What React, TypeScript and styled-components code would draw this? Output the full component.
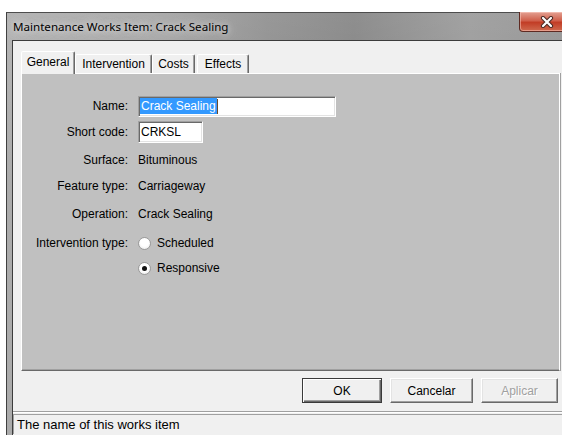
import React from "react";
import styled, { createGlobalStyle } from "styled-components";

const GlobalStyle = createGlobalStyle`
  html,
  body {
    margin: 0;
    background: #fff;
  }
  body {
    overflow: hidden;
  }
`;

const Page = styled.div`
  width: 562px;
  height: 435px;
  overflow: hidden;
  box-sizing: border-box;
  padding: 12px 0 0 6px;
`;

const Window = styled.div`
  width: 580px;
  height: 423px;
  box-sizing: border-box;
  display: flex;
  flex-direction: column;
  border-left: 1px solid #3f3f3f;
  border-top: 1px solid #4d4d4d;
  background: linear-gradient(180deg, rgba(255, 255, 255, 0.12), rgba(255, 255, 255, 0) 40%),
    linear-gradient(90deg, #ababab 0%, #a2a2a2 25%, #8a8a8a 45%, #7f7f7f 60%, #969696 80%, #8c8c8c 100%);
`;

const TitleBar = styled.div`
  height: 27px;
  flex-shrink: 0;
  display: flex;
  align-items: center;
  padding-left: 6px;
`;

const Title = styled.span`
  font-family: "Noto Sans", "Open Sans", sans-serif;
  font-size: 11.6px;
  color: #000;
  text-shadow: 0 0 6px rgba(235, 235, 235, 0.95), 0 0 12px rgba(225, 225, 225, 0.8);
`;

const CloseButton = styled.div`
  align-self: flex-start;
  margin: -1px 11px 0 auto;
  width: 56px;
  height: 20px;
  box-sizing: border-box;
  border: 1px solid #5e2a22;
  border-top: none;
  border-radius: 0 0 4px 4px;
  background: linear-gradient(180deg, #e3a092 0%, #d0604c 45%, #c23d26 55%, #cf6a4f 100%);
  box-shadow: inset 0 0 0 1px rgba(255, 210, 200, 0.5);
  display: flex;
  align-items: center;
  justify-content: center;
`;

const Client = styled.div`
  flex: 1;
  margin: 0 6px 0 5px;
  border: 1px solid #3c3c3c;
  border-bottom: none;
  background: #f0f0f0;
  display: flex;
  flex-direction: column;
  font-family: "Liberation Sans", Arial, sans-serif;
  font-size: 12px;
  color: #000;
`;

const TabStrip = styled.div`
  display: flex;
  align-items: flex-end;
  padding: 10px 0 0 8px;
`;

const Tab = styled.div<{ $w: number; $active?: boolean; $gap?: number }>`
  position: relative;
  z-index: ${(p) => (p.$active ? 1 : 0)};
  width: ${(p) => p.$w}px;
  height: ${(p) => (p.$active ? 23 : 19)}px;
  margin-left: ${(p) => p.$gap ?? 0}px;
  margin-bottom: ${(p) => (p.$active ? -1 : 0)}px;
  box-sizing: border-box;
  background: #f0f0f0;
  border-style: solid;
  border-width: 1px 1px 0 1px;
  border-color: #fff #696969 transparent #fff;
  border-radius: 2px 2px 0 0;
  box-shadow: inset -1px 0 #a0a0a0;
  display: flex;
  align-items: ${(p) => (p.$active ? "flex-start" : "center")};
  justify-content: center;
  padding-top: ${(p) => (p.$active ? 3 : 0)}px;
  font-size: 12px;
  line-height: 15px;
`;

const Panel = styled.div`
  margin-left: 8px;
  width: 539px;
  height: 298px;
  box-sizing: border-box;
  background: #c0c0c0;
  border-top: 1px solid #fff;
  border-left: 1px solid #fff;
  border-right: 1px solid #fff;
  border-bottom: 1px solid #696969;
  box-shadow: inset 0 -1px #a0a0a0, 1px 0 #a0a0a0;
  padding-top: 21px;
`;

const Row = styled.div<{ $top?: number }>`
  display: grid;
  grid-template-columns: 106px 1fr;
  column-gap: 10px;
  align-items: center;
  height: 22px;
  margin-top: ${(p) => p.$top ?? 0}px;
`;

const Label = styled.span`
  text-align: right;
  white-space: nowrap;
`;

const Field = styled.div<{ $w: number; $h: number }>`
  width: ${(p) => p.$w}px;
  height: ${(p) => p.$h}px;
  box-sizing: border-box;
  background: #fff;
  border: 1px solid;
  border-color: #a0a0a0 #fff #fff #a0a0a0;
  box-shadow: inset 1px 1px #696969, inset -1px -1px #e3e3e3;
  padding-left: 1px;
  display: flex;
  align-items: center;
  font-size: 12px;
  white-space: nowrap;
`;

const Selection = styled.span`
  background: #3399ff;
  color: #fff;
  padding: 0 1px;
  line-height: 16px;
`;

const Caret = styled.span`
  width: 1px;
  height: 15px;
  background: #6b4a2a;
`;

const FieldText = styled.span`
  padding-left: 1px;
`;

const Value = styled.span`
  white-space: nowrap;
`;

const RadioOption = styled.label`
  display: flex;
  align-items: center;
  gap: 6px;
`;

const RadioMark = styled.span<{ $checked?: boolean }>`
  width: 13px;
  height: 13px;
  box-sizing: border-box;
  border-radius: 50%;
  border: 1px solid #9a9a9a;
  background: radial-gradient(circle at 50% 40%, #ffffff 45%, #e2e2e2 100%);
  display: flex;
  align-items: center;
  justify-content: center;

  &::after {
    content: "";
    display: ${(p) => (p.$checked ? "block" : "none")};
    width: 5px;
    height: 5px;
    border-radius: 50%;
    background: #111;
  }
`;

const ButtonRow = styled.div`
  display: flex;
  gap: 8px;
  margin-top: 7px;
  padding-left: 289px;
`;

const Button = styled.button<{ $w: number; $default?: boolean }>`
  width: ${(p) => p.$w}px;
  height: 25px;
  box-sizing: border-box;
  margin: 0;
  padding: 0;
  background: #f0f0f0;
  font-family: "Liberation Sans", Arial, sans-serif;
  font-size: 12px;
  color: #000;
  border: 1px solid;
  border-color: ${(p) => (p.$default ? "#3a3a3a" : "#fff #696969 #696969 #fff")};
  box-shadow: ${(p) =>
    p.$default
      ? "inset 1px 1px #fff, inset -1px -1px #696969, inset -2px -2px #a0a0a0"
      : "inset -1px -1px #a0a0a0, inset 1px 1px #e3e3e3"};

  &:disabled {
    color: #a0a0a0;
    text-shadow: 1px 1px #fff;
  }
`;

const Separator = styled.div`
  margin-top: 8px;
  border-top: 1px solid #a0a0a0;
  border-bottom: 1px solid #fff;
`;

const StatusBar = styled.div`
  margin-top: 1px;
  height: 20px;
  box-sizing: border-box;
  border-top: 1px solid #a0a0a0;
  border-left: 1px solid #a0a0a0;
  padding-left: 3px;
  display: flex;
  align-items: center;
  font-size: 13px;
  color: #000;
`;

const CloseGlyph = () => (
  <svg width="14" height="12" viewBox="0 0 14 12">
    <path d="M3 2 L11 10 M11 2 L3 10" stroke="#4a2a24" strokeWidth="4.2" strokeLinecap="round" />
    <path d="M3 2 L11 10 M11 2 L3 10" stroke="#fff" strokeWidth="2.2" strokeLinecap="round" />
  </svg>
);

const App: React.FC = () => {
  return (
    <>
      <GlobalStyle />
      <Page>
        <Window>
          <TitleBar>
            <Title>Maintenance Works Item: Crack Sealing</Title>
            <CloseButton>
              <CloseGlyph />
            </CloseButton>
          </TitleBar>
          <Client>
            <TabStrip>
              <Tab $w={54} $active>
                General
              </Tab>
              <Tab $w={77}>Intervention</Tab>
              <Tab $w={43}>Costs</Tab>
              <Tab $w={52} $gap={2}>
                Effects
              </Tab>
            </TabStrip>
            <Panel>
              <Row>
                <Label>Name:</Label>
                <Field $w={198} $h={21}>
                  <Selection>Crack Sealing</Selection>
                  <Caret />
                </Field>
              </Row>
              <Row $top={4}>
                <Label>Short code:</Label>
                <Field $w={65} $h={22}>
                  <FieldText>CRKSL</FieldText>
                </Field>
              </Row>
              <Row $top={6}>
                <Label>Surface:</Label>
                <Value>Bituminous</Value>
              </Row>
              <Row $top={4}>
                <Label>Feature type:</Label>
                <Value>Carriageway</Value>
              </Row>
              <Row $top={6}>
                <Label>Operation:</Label>
                <Value>Crack Sealing</Value>
              </Row>
              <Row $top={7}>
                <Label>Intervention type:</Label>
                <RadioOption>
                  <RadioMark />
                  Scheduled
                </RadioOption>
              </Row>
              <Row $top={3}>
                <Label />
                <RadioOption>
                  <RadioMark $checked />
                  Responsive
                </RadioOption>
              </Row>
            </Panel>
            <ButtonRow>
              <Button $w={80} $default>
                OK
              </Button>
              <Button $w={83}>Cancelar</Button>
              <Button $w={77} disabled>
                Aplicar
              </Button>
            </ButtonRow>
            <Separator />
            <StatusBar>The name of this works item</StatusBar>
          </Client>
        </Window>
      </Page>
    </>
  );
};

export default App;
